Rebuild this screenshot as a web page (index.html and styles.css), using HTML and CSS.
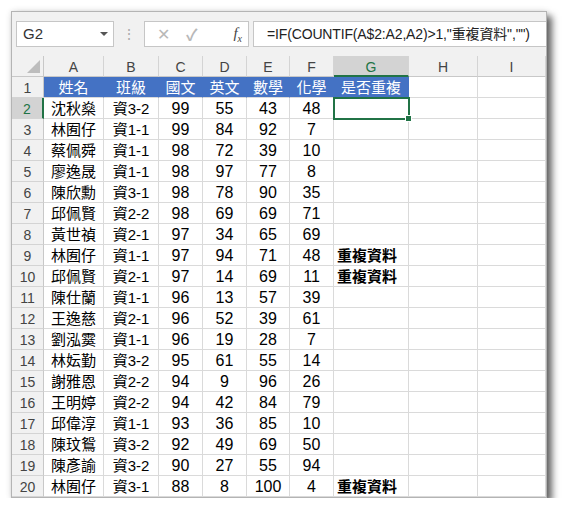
FILE: index.html
```html
<!DOCTYPE html>
<html lang="zh-Hant">
<head>
    <meta charset="UTF-8">
    <title>重複資料</title>
    <link rel="stylesheet" href="styles.css">
</head>
<body>
    <div class="window">
        <div class="formula-bar">
            <div class="name-box">G2<span class="arrow"></span></div>
            <div class="dots">⋮</div>
            <div class="buttons">
                <span class="btn">✕</span>
                <span class="btn check">✓</span>
                <span class="fx">f<sub>x</sub></span>
            </div>
            <div class="formula">=IF(COUNTIF(A$2:A2,A2)&gt;1,"重複資料","")</div>
        </div>

        <div class="sheet">
            <div class="corner"><span class="tri"></span></div>
            <div class="col">A</div>
            <div class="col">B</div>
            <div class="col">C</div>
            <div class="col">D</div>
            <div class="col">E</div>
            <div class="col">F</div>
            <div class="col active">G</div>
            <div class="col">H</div>
            <div class="col">I</div>

            <div class="row">1</div>
            <div class="head">姓名</div>
            <div class="head">班級</div>
            <div class="head">國文</div>
            <div class="head">英文</div>
            <div class="head">數學</div>
            <div class="head">化學</div>
            <div class="head">是否重複</div>
            <div class="cell"></div>
            <div class="cell"></div>

            <div class="row active">2</div>
            <div class="cell">沈秋燊</div><div class="cell">資3-2</div><div class="cell n">99</div><div class="cell n">55</div><div class="cell n">43</div><div class="cell n">48</div><div class="cell sel"></div><div class="cell"></div><div class="cell"></div>

            <div class="row">3</div>
            <div class="cell">林囿仔</div><div class="cell">資1-1</div><div class="cell n">99</div><div class="cell n">84</div><div class="cell n">92</div><div class="cell n">7</div><div class="cell"></div><div class="cell"></div><div class="cell"></div>

            <div class="row">4</div>
            <div class="cell">蔡佩舜</div><div class="cell">資1-1</div><div class="cell n">98</div><div class="cell n">72</div><div class="cell n">39</div><div class="cell n">10</div><div class="cell"></div><div class="cell"></div><div class="cell"></div>

            <div class="row">5</div>
            <div class="cell">廖逸晟</div><div class="cell">資1-1</div><div class="cell n">98</div><div class="cell n">97</div><div class="cell n">77</div><div class="cell n">8</div><div class="cell"></div><div class="cell"></div><div class="cell"></div>

            <div class="row">6</div>
            <div class="cell">陳欣勳</div><div class="cell">資3-1</div><div class="cell n">98</div><div class="cell n">78</div><div class="cell n">90</div><div class="cell n">35</div><div class="cell"></div><div class="cell"></div><div class="cell"></div>

            <div class="row">7</div>
            <div class="cell">邱佩賢</div><div class="cell">資2-2</div><div class="cell n">98</div><div class="cell n">69</div><div class="cell n">69</div><div class="cell n">71</div><div class="cell"></div><div class="cell"></div><div class="cell"></div>

            <div class="row">8</div>
            <div class="cell">黃世禎</div><div class="cell">資2-1</div><div class="cell n">97</div><div class="cell n">34</div><div class="cell n">65</div><div class="cell n">69</div><div class="cell"></div><div class="cell"></div><div class="cell"></div>

            <div class="row">9</div>
            <div class="cell">林囿仔</div><div class="cell">資1-1</div><div class="cell n">97</div><div class="cell n">94</div><div class="cell n">71</div><div class="cell n">48</div><div class="cell dup">重複資料</div><div class="cell"></div><div class="cell"></div>

            <div class="row">10</div>
            <div class="cell">邱佩賢</div><div class="cell">資2-1</div><div class="cell n">97</div><div class="cell n">14</div><div class="cell n">69</div><div class="cell n">11</div><div class="cell dup">重複資料</div><div class="cell"></div><div class="cell"></div>

            <div class="row">11</div>
            <div class="cell">陳仕蘭</div><div class="cell">資1-1</div><div class="cell n">96</div><div class="cell n">13</div><div class="cell n">57</div><div class="cell n">39</div><div class="cell"></div><div class="cell"></div><div class="cell"></div>

            <div class="row">12</div>
            <div class="cell">王逸慈</div><div class="cell">資2-1</div><div class="cell n">96</div><div class="cell n">52</div><div class="cell n">39</div><div class="cell n">61</div><div class="cell"></div><div class="cell"></div><div class="cell"></div>

            <div class="row">13</div>
            <div class="cell">劉泓霙</div><div class="cell">資1-1</div><div class="cell n">96</div><div class="cell n">19</div><div class="cell n">28</div><div class="cell n">7</div><div class="cell"></div><div class="cell"></div><div class="cell"></div>

            <div class="row">14</div>
            <div class="cell">林妘勤</div><div class="cell">資3-2</div><div class="cell n">95</div><div class="cell n">61</div><div class="cell n">55</div><div class="cell n">14</div><div class="cell"></div><div class="cell"></div><div class="cell"></div>

            <div class="row">15</div>
            <div class="cell">謝雅恩</div><div class="cell">資2-2</div><div class="cell n">94</div><div class="cell n">9</div><div class="cell n">96</div><div class="cell n">26</div><div class="cell"></div><div class="cell"></div><div class="cell"></div>

            <div class="row">16</div>
            <div class="cell">王明婷</div><div class="cell">資2-2</div><div class="cell n">94</div><div class="cell n">42</div><div class="cell n">84</div><div class="cell n">79</div><div class="cell"></div><div class="cell"></div><div class="cell"></div>

            <div class="row">17</div>
            <div class="cell">邱偉淳</div><div class="cell">資1-1</div><div class="cell n">93</div><div class="cell n">36</div><div class="cell n">85</div><div class="cell n">10</div><div class="cell"></div><div class="cell"></div><div class="cell"></div>

            <div class="row">18</div>
            <div class="cell">陳玟鴛</div><div class="cell">資3-2</div><div class="cell n">92</div><div class="cell n">49</div><div class="cell n">69</div><div class="cell n">50</div><div class="cell"></div><div class="cell"></div><div class="cell"></div>

            <div class="row">19</div>
            <div class="cell">陳彥諭</div><div class="cell">資3-2</div><div class="cell n">90</div><div class="cell n">27</div><div class="cell n">55</div><div class="cell n">94</div><div class="cell"></div><div class="cell"></div><div class="cell"></div>

            <div class="row">20</div>
            <div class="cell">林囿仔</div><div class="cell">資3-1</div><div class="cell n">88</div><div class="cell n">8</div><div class="cell n">100</div><div class="cell n">4</div><div class="cell dup">重複資料</div><div class="cell"></div><div class="cell"></div>
        </div>
    </div>
</body>
</html>
```

FILE: styles.css
```css
body {
    margin: 0;
    background: #fff;
    font-family: "Liberation Sans", "Noto Sans CJK TC", sans-serif;
}

.window {
    box-sizing: border-box;
    width: 536px;
    margin: 11px 0 0 11px;
    border: 1px solid #b4b4b4;
    background: #fff;
    box-shadow: 5px 5px 7px rgba(0, 0, 0, 0.6), 0 0 6px rgba(0, 0, 0, 0.12);
}

.formula-bar {
    height: 44px;
    display: flex;
    align-items: center;
    padding-left: 4px;
    background: #f1f1f1;
}

.name-box, .buttons, .formula {
    box-sizing: border-box;
    height: 26px;
    background: #fff;
    border: 1px solid #c6c6c6;
}

.name-box {
    position: relative;
    width: 98px;
    padding-left: 6px;
    line-height: 24px;
    font-size: 15px;
    color: #333;
}

.arrow {
    position: absolute;
    right: 5px;
    top: 10px;
    border-left: 4px solid transparent;
    border-right: 4px solid transparent;
    border-top: 4px solid #555;
}

.dots {
    width: 30px;
    text-align: center;
    color: #aaa;
    font-size: 14px;
}

.buttons {
    width: 105px;
    display: flex;
    align-items: center;
    padding: 0 6px 0 12px;
    gap: 16px;
    color: #b8b8b8;
    font-size: 16px;
}

.check {
    font-weight: bold;
}

.fx {
    margin-left: auto;
    color: #444;
    font-family: "Liberation Serif", serif;
    font-style: italic;
    font-size: 15px;
}

.fx sub {
    font-size: 10px;
}

.formula {
    flex: 1;
    margin-left: 4px;
    border-right: none;
    padding-left: 13px;
    line-height: 24px;
    font-size: 14px;
    letter-spacing: -0.15px;
    color: #222;
    white-space: nowrap;
    overflow: hidden;
}

.sheet {
    display: grid;
    grid-template-columns: 32px 60px 55px 44px 44px 43px 44px 75px 69px 68px;
    grid-auto-rows: 21px;
}

.sheet > div {
    box-sizing: border-box;
    border-right: 1px solid #dadada;
    border-bottom: 1px solid #dadada;
    text-align: center;
    line-height: 22px;
    font-size: 15px;
    white-space: nowrap;
}

.sheet > .corner {
    position: relative;
    background: #f1f1f1;
    border-right-color: #c8c8c8;
    border-bottom-color: #c8c8c8;
}

.tri {
    position: absolute;
    right: 3px;
    bottom: 3px;
    border-left: 13px solid transparent;
    border-bottom: 13px solid #bdbdbd;
}

.sheet > .col {
    background: #f1f1f1;
    color: #444;
    font-size: 14px;
    border-right-color: #d4d4d4;
    border-bottom-color: #c8c8c8;
}

.sheet > .col.active {
    background: #d3d3d3;
    color: #217346;
    border-bottom: 2px solid #217346;
}

.sheet > .row {
    background: #f1f1f1;
    color: #444;
    font-size: 14px;
    border-right-color: #c8c8c8;
    border-bottom-color: #d4d4d4;
}

.sheet > .row.active {
    background: #d3d3d3;
    color: #217346;
    border-right: 2px solid #217346;
}

.sheet > .head {
    background: #4472c4;
    color: #fff;
    border-right-color: #4472c4;
    border-bottom-color: #dadada;
}

.sheet > .n {
    font-size: 16px;
}

.sheet > .dup {
    text-align: left;
    padding-left: 3px;
    font-weight: bold;
}

.sheet > .sel {
    position: relative;
    outline: 2px solid #217346;
    outline-offset: -1px;
}

.sel::after {
    content: "";
    position: absolute;
    right: -4px;
    bottom: -4px;
    width: 5px;
    height: 5px;
    background: #217346;
    border: 1px solid #fff;
}
```
